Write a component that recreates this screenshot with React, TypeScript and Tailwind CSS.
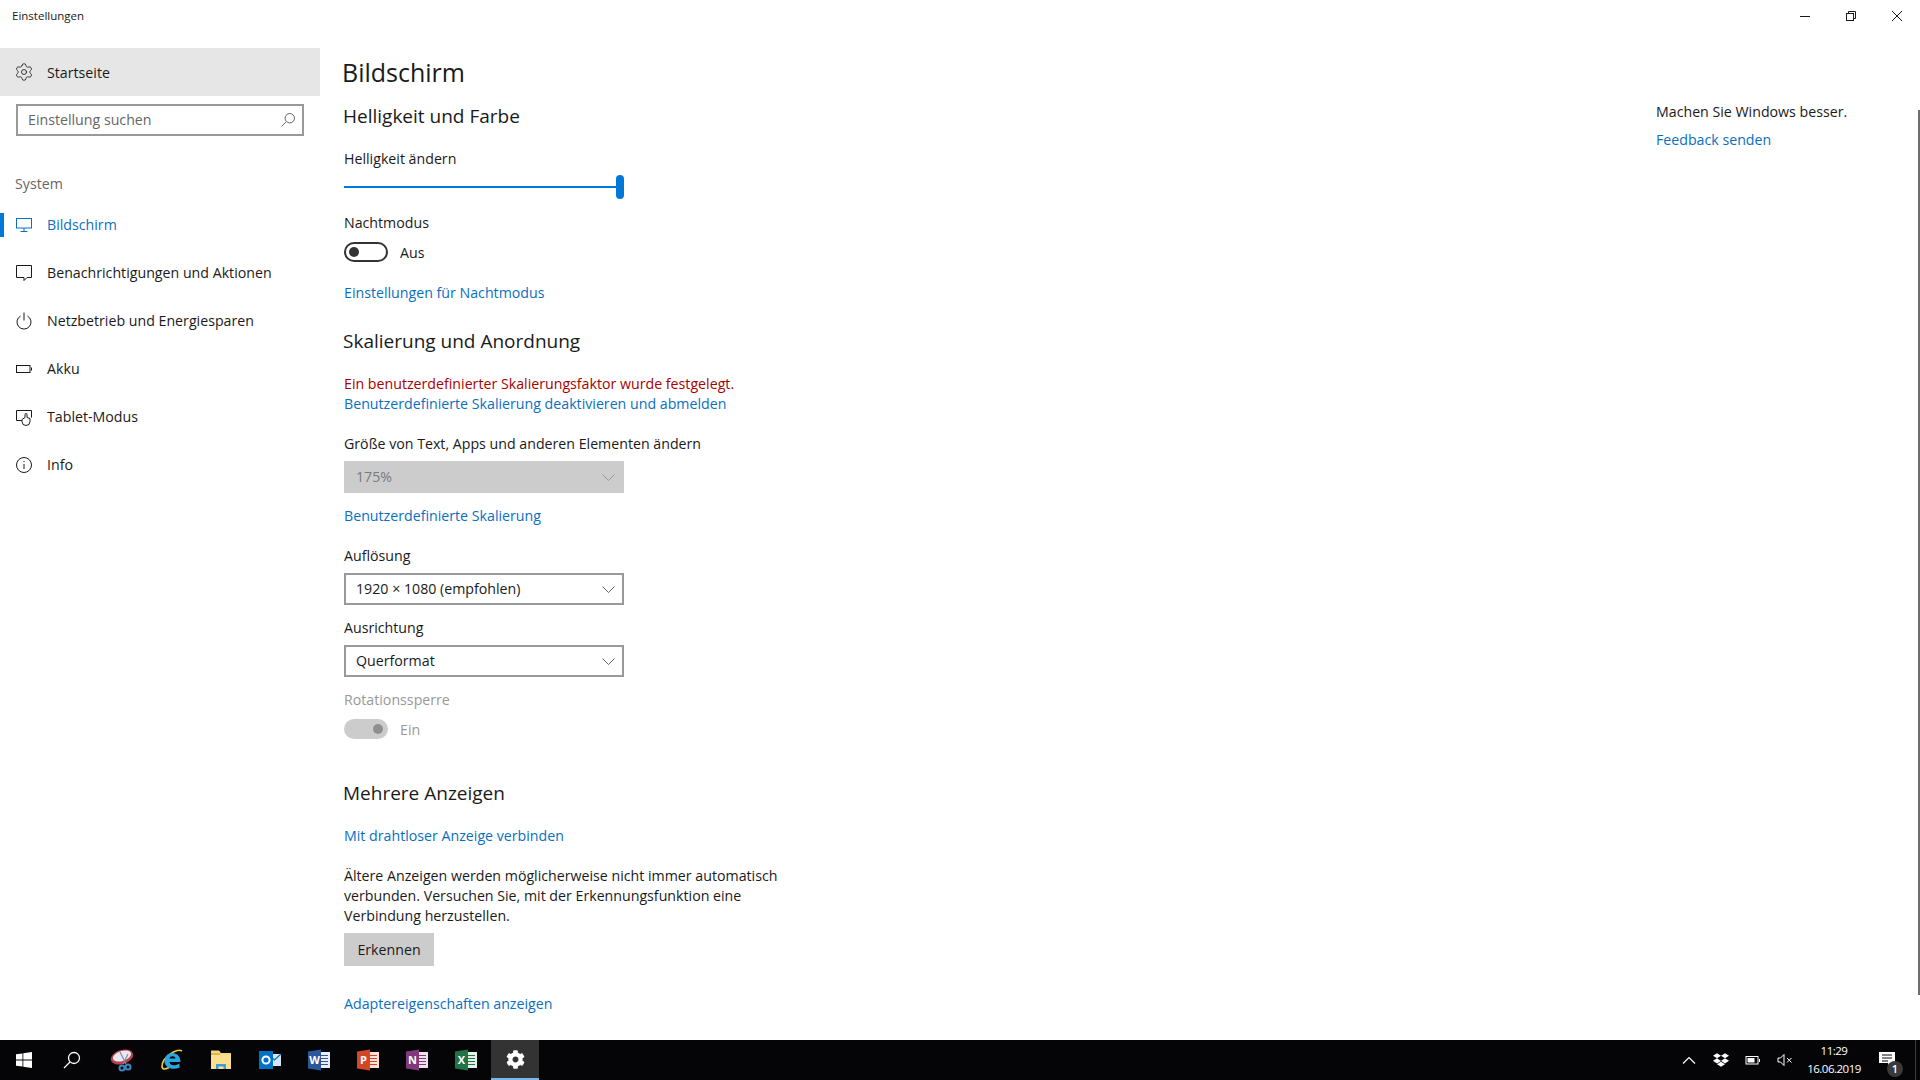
import { Settings } from 'lucide-react';
import { FaCog, FaDropbox } from 'react-icons/fa';
import type { ReactNode } from 'react';

const font = "font-['Open_Sans','Noto_Sans',sans-serif]";
const label = 'h-5 whitespace-nowrap leading-[22px]';

function NavIcon({ children }: { children: ReactNode }) {
  return (
    <svg width="20" height="20" viewBox="0 0 20 20" fill="none" stroke="currentColor" strokeWidth="1" className="shrink-0">
      {children}
    </svg>
  );
}

const navItems: { label: string; active?: boolean; icon: ReactNode }[] = [
  {
    label: 'Bildschirm',
    active: true,
    icon: (
      <>
        <rect x="2.500" y="3.500" width="15" height="9.500" />
        <path d="M10 13v3M6.500 16.500h7" />
      </>
    ),
  },
  {
    label: 'Benachrichtigungen und Aktionen',
    icon: <path d="M2.500 2.500h15v12h-4.500l-3 3v-3h-7.500z" />,
  },
  {
    label: 'Netzbetrieb und Energiesparen',
    icon: (
      <>
        <path d="M6.500 5a7 7 0 1 0 7 0" />
        <path d="M10 1.500v8" />
      </>
    ),
  },
  {
    label: 'Akku',
    icon: (
      <>
        <rect x="2.500" y="6.500" width="13.500" height="7" />
        <path d="M17.500 8.500v3" />
      </>
    ),
  },
  {
    label: 'Tablet-Modus',
    icon: (
      <>
        <path d="M8 13.500H2.500v-10h15v7" />
        <path d="M11 10.500V7.500a1 1 0 0 1 2 0v3l3 1v3a4 4 0 0 1-8 0v-2z" fill="white" />
      </>
    ),
  },
  {
    label: 'Info',
    icon: (
      <>
        <circle cx="10" cy="10" r="7.500" />
        <path d="M10 9v5M10 6v1.200" />
      </>
    ),
  },
];

function Sidebar() {
  return (
    <aside className="w-80 shrink-0 bg-white">
      <div className="flex h-12 items-center bg-[#e6e6e6] pl-[14px] text-[#1a1a1a]">
        <Settings size={20} strokeWidth={1} />
        <span className="ml-[13px] h-5 leading-[22px]">Startseite</span>
      </div>
      <div className="mx-4 mt-2 flex h-8 items-center justify-between border-2 border-[#999999] pl-[10px] pr-[6px] text-[#666666]">
        <span>Einstellung suchen</span>
        <svg width="16" height="16" viewBox="0 0 16 16" fill="none" stroke="#666666" strokeWidth="1">
          <circle cx="9.800" cy="6.200" r="4.700" />
          <path d="M6.400 9.600L1.500 14.500" />
        </svg>
      </div>
      <div className="mt-[38px] pl-[15px] leading-5 text-[#666666]">System</div>
      <nav className="mt-[7px]">
        {navItems.map((item) => (
          <div key={item.label} className={item.active ? 'flex h-12 items-center text-[#0a6fc2]' : 'flex h-12 items-center text-[#1a1a1a]'}>
            <div className={item.active ? 'h-6 w-1 bg-[#0078d7]' : 'h-6 w-1'} />
            <div className="ml-[10px] flex items-center">
              <NavIcon>{item.icon}</NavIcon>
              <span className="ml-[13px]">{item.label}</span>
            </div>
          </div>
        ))}
      </nav>
    </aside>
  );
}

function TextLink({ children, className = '' }: { children: ReactNode; className?: string }) {
  return <div className={`${label} text-[#0a6fc2] ${className}`}>{children}</div>;
}

function Heading({ children, className = '' }: { children: ReactNode; className?: string }) {
  return <h2 className={`-ml-px h-7 text-[19px] leading-7 text-[#1a1a1a] ${className}`}>{children}</h2>;
}

function Dropdown({ value, disabled }: { value: string; disabled?: boolean }) {
  return (
    <div
      className={
        disabled
          ? 'mt-2 flex h-8 w-[280px] items-center justify-between bg-[#cccccc] pl-3 pr-[9px] text-[#7a7a7a]'
          : 'mt-2 flex h-8 w-[280px] items-center justify-between border-2 border-[#999999] pl-[10px] pr-[7px] text-[#1a1a1a]'
      }
    >
      <span>{value}</span>
      <svg width="13" height="7" viewBox="0 0 13 7" fill="none" stroke={disabled ? '#999999' : '#666666'} strokeWidth="1">
        <path d="M.5 .5l6 6 6-6" />
      </svg>
    </div>
  );
}

function Content() {
  return (
    <main className="flex-1 pl-6 text-[#1a1a1a]">
      <h1 className="-ml-[2px] h-12 text-[25px] leading-[48px]">Bildschirm</h1>
      <Heading className="mt-[6px]">Helligkeit und Farbe</Heading>

      <div className={`mt-[18px] ${label}`}>Helligkeit ändern</div>
      <div className="mt-[7px] flex h-6 w-[280px] items-center">
        <div className="h-[2px] flex-1 bg-[#0078d7]" />
        <div className="h-6 w-2 rounded-full bg-[#0078d7]" />
      </div>

      <div className={`mt-[13px] ${label}`}>Nachtmodus</div>
      <div className="mt-[10px] flex h-5 items-center">
        <div className="flex h-5 w-11 items-center rounded-full border-2 border-[#333333] pl-[3px]">
          <div className="h-[10px] w-[10px] rounded-full bg-[#333333]" />
        </div>
        <span className="ml-3 h-5 leading-[22px]">Aus</span>
      </div>
      <TextLink className="mt-5">Einstellungen für Nachtmodus</TextLink>

      <Heading className="mt-[25px]">Skalierung und Anordnung</Heading>
      <div className={`mt-[18px] ${label} text-[#a80000]`}>Ein benutzerdefinierter Skalierungsfaktor wurde festgelegt.</div>
      <TextLink>Benutzerdefinierte Skalierung deaktivieren und abmelden</TextLink>

      <div className={`mt-5 ${label}`}>Größe von Text, Apps und anderen Elementen ändern</div>
      <Dropdown value="175%" disabled />
      <TextLink className="mt-3">Benutzerdefinierte Skalierung</TextLink>

      <div className={`mt-5 ${label}`}>Auflösung</div>
      <Dropdown value="1920 × 1080 (empfohlen)" />
      <div className={`mt-3 ${label}`}>Ausrichtung</div>
      <Dropdown value="Querformat" />

      <div className={`mt-3 ${label} text-[#999999]`}>Rotationssperre</div>
      <div className="mt-[10px] flex h-5 items-center">
        <div className="flex h-5 w-11 items-center justify-end rounded-full bg-[#cccccc] pr-[5px]">
          <div className="h-[10px] w-[10px] rounded-full bg-[#8f8f8f]" />
        </div>
        <span className="ml-3 h-5 leading-[22px] text-[#999999]">Ein</span>
      </div>

      <Heading className="mt-10">Mehrere Anzeigen</Heading>
      <TextLink className="mt-[18px]">Mit drahtloser Anzeige verbinden</TextLink>
      <p className="mt-[21px] w-[440px] leading-5">
        Ältere Anzeigen werden möglicherweise nicht immer automatisch verbunden. Versuchen Sie, mit der Erkennungsfunktion eine Verbindung herzustellen.
      </p>
      <div className="mt-[7px] flex h-[33px] w-[90px] items-center justify-center bg-[#cccccc]">Erkennen</div>
      <TextLink className="mt-[27px]">Adaptereigenschaften anzeigen</TextLink>
    </main>
  );
}

function TaskIcon({ children, active, className = 'w-[49px]' }: { children: ReactNode; active?: boolean; className?: string }) {
  return (
    <div
      className={
        active
          ? 'ml-px flex h-10 w-12 items-center justify-center border-b-2 border-[#76b9ed] bg-[#333333]'
          : `flex h-10 items-center justify-center ${className}`
      }
    >
      {children}
    </div>
  );
}

function OfficeIcon({ letter, dark, page }: { letter: string; dark: string; page: string }) {
  return (
    <svg width="24" height="24" viewBox="0 0 24 24">
      <rect x="11" y="4" width="12" height="16" fill={page} />
      <path d="M14 7.500h7M14 10.500h7M14 13.500h7M14 16.500h7" stroke={dark} strokeWidth="1.200" />
      <path d="M1 3.500L14 1.500v21L1 20.500z" fill={dark} />
      <text x="7.500" y="15.500" fontSize="11" fontWeight="700" fill="white" textAnchor="middle" fontFamily="Open Sans">
        {letter}
      </text>
    </svg>
  );
}

function Taskbar() {
  return (
    <footer className="flex h-10 shrink-0 items-center justify-between bg-[#050508] text-white">
      <div className="flex items-center">
        <TaskIcon className="w-12">
          <svg width="16" height="16" viewBox="0 0 16 16" fill="white">
            <path d="M0 2.300l6.500-.9v6.200H0zM7.300 1.300L16 0v7.600H7.300zM0 8.400h6.500v6.200L0 13.700zM7.300 8.400H16V16l-8.700-1.300z" />
          </svg>
        </TaskIcon>
        <TaskIcon className="mr-[2px] w-12">
          <svg width="18" height="18" viewBox="0 0 18 18" fill="none" stroke="white" strokeWidth="1.300">
            <circle cx="11" cy="7" r="5.500" />
            <path d="M7 11l-6 6" />
          </svg>
        </TaskIcon>
        <TaskIcon>
          <svg width="26" height="26" viewBox="0 0 26 26">
            <ellipse cx="12" cy="10" rx="11.500" ry="7" transform="rotate(-18 12 10)" fill="#b8404c" />
            <ellipse cx="12" cy="9" rx="9.500" ry="5" transform="rotate(-18 12 9)" fill="#e8e8ee" />
            <path d="M10 5l6 12M18 7l-5 10" stroke="#7d8da0" strokeWidth="1.200" />
            <circle cx="18" cy="20" r="2.500" fill="none" stroke="#3f88c5" strokeWidth="2" />
            <circle cx="12" cy="21" r="2.500" fill="none" stroke="#3f88c5" strokeWidth="2" />
          </svg>
        </TaskIcon>
        <TaskIcon>
          <svg width="24" height="24" viewBox="0 0 24 24" fill="none">
            <path d="M22 3C18 .5 9 5 4 12c-3 5-2.500 9 .5 9 2 0 5-1.500 7-3.500" stroke="#f0c93a" strokeWidth="1.600" />
            <path fillRule="evenodd" d="M4.500 13.500C4.500 8.500 8 5 12.500 5s8 3.500 8 9H9.500c.3 3.800 6 4.200 10 1.500v4C13 22.500 4.500 20 4.500 13.500zM9.500 10.500h6c-.3-3-5.600-3-6 0z" fill="#29a7e1" />
          </svg>
        </TaskIcon>
        <TaskIcon>
          <svg width="24" height="24" viewBox="0 0 24 24">
            <path d="M2 2.500h8l2 2.500h10v16H2z" fill="#f5d77f" />
            <rect x="2" y="7" width="20" height="14" fill="#fbe08e" />
            <rect x="2" y="5" width="9" height="2" fill="#e3b34f" />
            <path d="M7 21v-5h10v5h-2.500v-2.500h-5V21z" fill="#3f9fdd" />
          </svg>
        </TaskIcon>
        <TaskIcon>
          <svg width="24" height="24" viewBox="0 0 24 24">
            <rect x="10" y="6" width="13" height="12" fill="#cfe6f7" />
            <path d="M10 6l6.500 6L23 6" fill="none" stroke="#0f6cbd" strokeWidth="1.200" />
            <rect x="1" y="3" width="14" height="18" fill="#0072c6" />
            <circle cx="8" cy="12" r="3.600" fill="none" stroke="white" strokeWidth="2" />
          </svg>
        </TaskIcon>
        <TaskIcon>
          <OfficeIcon letter="W" dark="#2b579a" page="#e7eef8" />
        </TaskIcon>
        <TaskIcon>
          <OfficeIcon letter="P" dark="#d24726" page="#fbe3dc" />
        </TaskIcon>
        <TaskIcon>
          <OfficeIcon letter="N" dark="#80397b" page="#efe0ee" />
        </TaskIcon>
        <TaskIcon>
          <OfficeIcon letter="X" dark="#217346" page="#e2f0e8" />
        </TaskIcon>
        <TaskIcon active>
          <FaCog size={19} />
        </TaskIcon>
      </div>

      <div className="flex h-10 items-center">
        <div className="flex w-8 justify-center">
          <svg width="16" height="16" viewBox="0 0 16 16" fill="none" stroke="white" strokeWidth="1.200">
            <path d="M2 11.500l6-6 6 6" />
          </svg>
        </div>
        <div className="flex w-8 justify-center">
          <FaDropbox size={16} />
        </div>
        <div className="flex w-8 justify-center">
          <svg width="16" height="16" viewBox="0 0 16 16" fill="none" stroke="white" strokeWidth="1">
            <rect x="1" y="4.500" width="12" height="7.500" />
            <rect x="2.500" y="6" width="7" height="4.500" fill="white" stroke="none" />
            <path d="M14.500 7v3" />
          </svg>
        </div>
        <div className="flex w-8 justify-center">
          <svg width="16" height="16" viewBox="0 0 16 16" fill="none" stroke="white" strokeWidth="1">
            <path d="M1 6h2.500L7 2.500v11L3.500 10H1z" />
            <path d="M10 6l4.500 4.500M14.500 6L10 10.500" />
          </svg>
        </div>
        <div className="w-[66px] whitespace-nowrap text-center text-[11.5px] leading-[18px] tracking-[-0.5px]">
          <div>11:29</div>
          <div>16.06.2019</div>
        </div>
        <div className="relative h-10 w-12 pl-3 pt-3">
          <svg width="16" height="13" viewBox="0 0 16 13" fill="white" className="block">
            <path d="M0 0h16v11h-5l-2 2v-2H0z" />
            <path d="M3 3h10M3 6h10M3 9h6" stroke="#050508" />
          </svg>
          <div className="absolute left-5 top-[21px] flex h-4 w-4 items-center justify-center rounded-full bg-[#3a3a3a] text-[11px] font-semibold">
            1
          </div>
        </div>
        <div className="h-10 w-[5px] border-l border-[#3a3a3a]" />
      </div>
    </footer>
  );
}

export default function App() {
  return (
    <div className={`relative flex h-screen flex-col overflow-hidden bg-white text-[14.2px] ${font}`}>
      <header className="flex h-12 shrink-0 items-start justify-between text-[#1a1a1a]">
        <div className="pl-3 pt-[6px] text-[11.5px] leading-5">Einstellungen</div>
        <div className="flex text-[#1a1a1a]">
          <div className="flex h-8 w-[46px] items-center justify-center">
            <svg width="12" height="12" viewBox="0 0 12 12" stroke="currentColor"><path d="M1 6.500h10" /></svg>
          </div>
          <div className="flex h-8 w-[46px] items-center justify-center">
            <svg width="12" height="12" viewBox="0 0 12 12" fill="none" stroke="currentColor">
              <rect x="1.500" y="3.500" width="7" height="7" />
              <path d="M3.500 3.500v-2h7v7h-2" />
            </svg>
          </div>
          <div className="flex h-8 w-[46px] items-center justify-center">
            <svg width="12" height="12" viewBox="0 0 12 12" stroke="currentColor"><path d="M1 1l10 10M11 1L1 11" /></svg>
          </div>
        </div>
      </header>

      <div className="flex min-h-0 flex-1 bg-white">
        <Sidebar />
        <Content />
        <aside className="w-[264px] shrink-0 pt-[54px] text-[#1a1a1a]">
          <div className="leading-5">Machen Sie Windows besser.</div>
          <div className="mt-2 leading-5 text-[#0a6fc2]">Feedback senden</div>
        </aside>
      </div>

      {/* overlay scrollbar thumb */}
      <div className="absolute right-0 top-[110px] h-[885px] w-[2px] bg-[#6e6e6e]" />

      <Taskbar />
    </div>
  );
}
